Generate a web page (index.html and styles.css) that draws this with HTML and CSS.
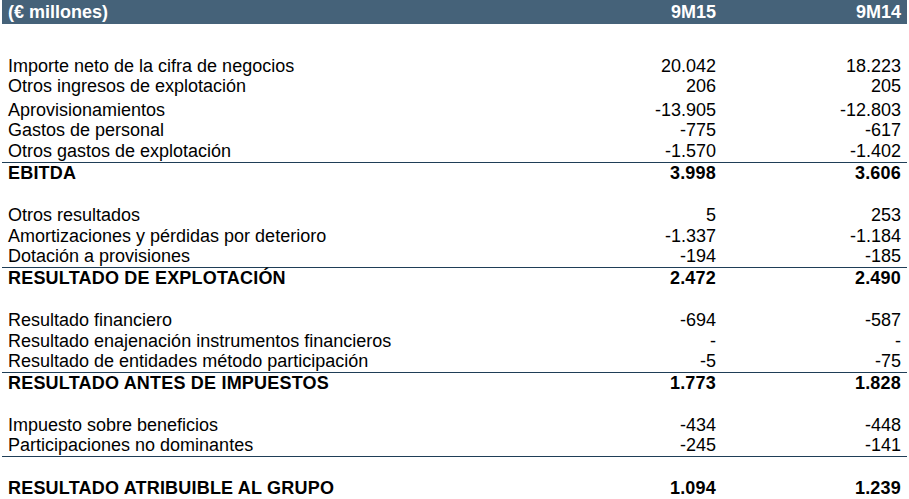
FILE: index.html
```html
<!DOCTYPE html>
<html lang="es">
<head>
<meta charset="utf-8">
<title>Cuenta de resultados</title>
<link rel="stylesheet" href="styles.css">
</head>
<body>
<div class="table">
  <div class="row head"><span class="lbl">(€ millones)</span><span class="num">9M15</span><span class="num">9M14</span></div>
  <div class="row h32"></div>
  <div class="row h21"><span class="lbl">Importe neto de la cifra de negocios</span><span class="num">20.042</span><span class="num">18.223</span></div>
  <div class="row h20"><span class="lbl">Otros ingresos de explotación</span><span class="num">206</span><span class="num">205</span></div>
  <div class="row h24"><span class="lbl">Aprovisionamientos</span><span class="num">-13.905</span><span class="num">-12.803</span></div>
  <div class="row h20"><span class="lbl">Gastos de personal</span><span class="num">-775</span><span class="num">-617</span></div>
  <div class="row h22 line"><span class="lbl">Otros gastos de explotación</span><span class="num">-1.570</span><span class="num">-1.402</span></div>
  <div class="row h21 bold"><span class="lbl">EBITDA</span><span class="num">3.998</span><span class="num">3.606</span></div>
  <div class="row h21"></div>
  <div class="row h21"><span class="lbl">Otros resultados</span><span class="num">5</span><span class="num">253</span></div>
  <div class="row h21"><span class="lbl">Amortizaciones y pérdidas por deterioro</span><span class="num">-1.337</span><span class="num">-1.184</span></div>
  <div class="row h21 line"><span class="lbl">Dotación a provisiones</span><span class="num">-194</span><span class="num">-185</span></div>
  <div class="row h22 bold up"><span class="lbl">RESULTADO DE EXPLOTACIÓN</span><span class="num">2.472</span><span class="num">2.490</span></div>
  <div class="row h20"></div>
  <div class="row h21"><span class="lbl">Resultado financiero</span><span class="num">-694</span><span class="num">-587</span></div>
  <div class="row h21"><span class="lbl">Resultado enajenación instrumentos financieros</span><span class="num">-</span><span class="num">-</span></div>
  <div class="row h21 line"><span class="lbl">Resultado de entidades método participación</span><span class="num">-5</span><span class="num">-75</span></div>
  <div class="row h21 bold"><span class="lbl">RESULTADO ANTES DE IMPUESTOS</span><span class="num">1.773</span><span class="num">1.828</span></div>
  <div class="row h21"></div>
  <div class="row h21"><span class="lbl">Impuesto sobre beneficios</span><span class="num">-434</span><span class="num">-448</span></div>
  <div class="row h21 line"><span class="lbl">Participaciones no dominantes</span><span class="num">-245</span><span class="num">-141</span></div>
  <div class="row h22"></div>
  <div class="row h22 bold line up"><span class="lbl">RESULTADO ATRIBUIBLE AL GRUPO</span><span class="num">1.094</span><span class="num">1.239</span></div>
</div>
</body>
</html>
```

FILE: styles.css
```css
html, body {
  margin: 0;
  padding: 0;
  background: #ffffff;
}

body {
  font-family: "Liberation Sans", Arial, sans-serif;
  font-size: 18px;
  color: #000000;
}

.table {
  width: 905px;
  margin-left: 2px;
}

.row {
  display: grid;
  grid-template-columns: 523px 185px 185px;
  padding: 0 6px;
  align-items: end;
  box-sizing: border-box;
  line-height: 18px;
  padding-bottom: 2px;
}

.row.head {
  height: 24px;
  background: #456279;
  color: #ffffff;
  font-weight: bold;
  align-items: center;
  padding-bottom: 0;
}

.h20 { height: 20px; }
.h21 { height: 21px; }
.h22 { height: 22px; }
.h24 { height: 24px; }
.h32 { height: 32px; }

.line {
  border-bottom: 1px solid #1f3e57;
}

.bold {
  font-weight: bold;
  letter-spacing: 0.2px;
}

.row.up {
  padding-bottom: 3px;
}

.lbl {
  white-space: nowrap;
}

.num {
  text-align: right;
  white-space: nowrap;
}
```
